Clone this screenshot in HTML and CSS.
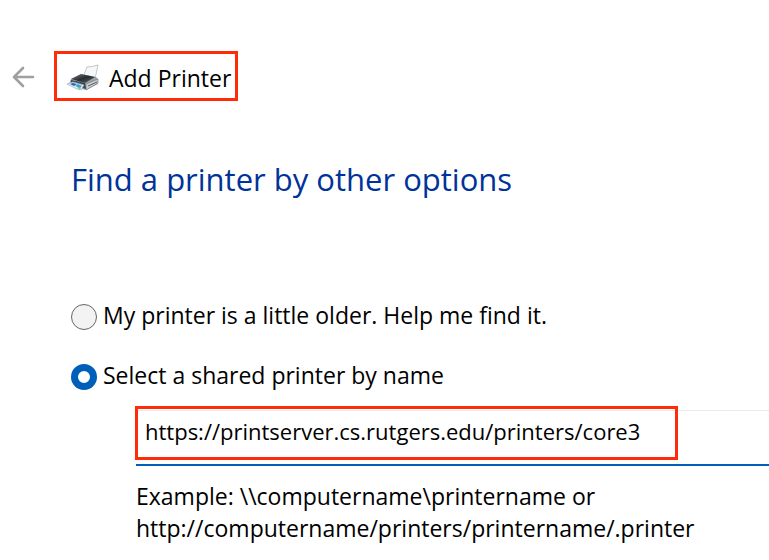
FILE: index.html
```html
<!DOCTYPE html>
<html lang="en">
<head>
  <meta charset="UTF-8">
  <title>Add Printer</title>
  <link rel="stylesheet" href="styles.css">
</head>
<body>
  <header class="title-bar">
    <button type="button" class="back-button" aria-label="Back">
      <svg width="24" height="24" viewBox="0 0 24 24" fill="none" stroke="#a0a0a0" stroke-width="2.6" stroke-linecap="round" stroke-linejoin="round">
        <path d="M21 13H3M11 4L2 13l9 9"/>
      </svg>
    </button>
    <div class="window-title highlight">
      <svg class="printer-icon" width="34" height="28" viewBox="1 0 34 28">
        <defs>
          <linearGradient id="lid" x1="0" y1="0" x2="1" y2="1">
            <stop offset="0" stop-color="#80868b"/>
            <stop offset=".5" stop-color="#282c30"/>
            <stop offset="1" stop-color="#62686d"/>
          </linearGradient>
        </defs>
        <!-- paper -->
        <path d="M17 13l4-10q5 0 11-2l-3 14z" fill="#f5f7f8" stroke="#b4babd" stroke-width=".8"/>
        <!-- body -->
        <path d="M5 15l10-5 15 3 2 2v5l-12 6-4-1-13-5z" fill="#9ca3a8"/>
        <path d="M20 20l12-5v4l-12 7z" fill="#c9ced1" stroke="#747b80" stroke-width=".7"/>
        <path d="M22 22l9-4" stroke="#596065"/>
        <path d="M5 15l10-5 14 3-10 6z" fill="url(#lid)"/>
        <path d="M5 16l14 3 1 6-15-5z" fill="#3c444c"/>
        <!-- printed photos -->
        <path d="M1 20l6-2 11 3-3 5-4-1z" fill="#e9eff3" stroke="#a2abb1" stroke-width=".7"/>
        <path d="M4 20l3-1 4 1-3 2z" fill="#176ac0"/>
        <path d="M9 22l3-2 4 2-2 2z" fill="#29a4ed"/>
        <path d="M11 24l2-1 2 1-1 1z" fill="#77b864"/>
      </svg>
      <span>Add Printer</span>
    </div>
  </header>

  <main class="content">
    <h1>Find a printer by other options</h1>
    <form class="options">
      <label class="option">
        <input type="radio" name="method">
        <span>My printer is a little older. Help me find it.</span>
      </label>
      <label class="option">
        <input type="radio" name="method" checked>
        <span>Select a shared printer by name</span>
      </label>
      <div class="shared-printer">
        <div class="name-field">
          <input type="text" class="name-input" aria-label="Printer name" value="https://printserver.cs.rutgers.edu/printers/core3">
          <span class="field-mark highlight"></span>
        </div>
        <p class="example">Example: \\computername\printername or<br>http://computername/printers/printername/.printer</p>
      </div>
    </form>
  </main>
</body>
</html>
```
FILE: styles.css
```css
body {
  margin: 0;
  background: #fff;
  color: #000;
  font-family: "Open Sans", "Noto Sans", sans-serif;
  font-size: 23px;
}

.highlight {
  border: 3px solid #ff2c0a;
}

.title-bar {
  display: flex;
  align-items: center;
  gap: 18px;
  padding: 51px 12px 0;
}

.back-button {
  display: flex;
  padding: 0;
  border: 0;
  background: none;
}

.window-title {
  display: flex;
  align-items: center;
  gap: 8px;
  padding: 8px 4px 4px 10px;
  line-height: 32px;
}

.content {
  padding-left: 71px;
}

h1 {
  margin: 58px 0 0;
  color: #003399;
  font-size: 31px;
  font-weight: 400;
  line-height: 40px;
}

.options {
  margin-top: 100px;
}

.option {
  display: flex;
  align-items: center;
  gap: 6px;
  margin-bottom: 24px;
  line-height: 32px;
}

.option span {
  padding-bottom: 4px;
}

.option input {
  appearance: none;
  box-sizing: border-box;
  width: 26px;
  height: 26px;
  margin: 0;
  border: 1px solid #666;
  border-radius: 50%;
  background: #f3f3f3;
}

.option input:checked {
  border: 7px solid #005fb8;
  background: #fff;
}

.shared-printer {
  margin: -9px 0 0 65px;
}

.name-field {
  position: relative;
  border-top: 1px solid #eaeaea;
  border-bottom: 2px solid #005fb8;
}

.name-input {
  display: block;
  box-sizing: border-box;
  width: 100%;
  height: 53px;
  padding: 0 9px 14px;
  border: 0;
  background: #fff;
  color: inherit;
  font: inherit;
  font-size: 22px;
}

/* red box around the typed address */
.field-mark {
  position: absolute;
  top: -5px;
  bottom: 4px;
  left: -1px;
  width: 537px;
  pointer-events: none;
}

.example {
  margin: 14px 0 0;
  line-height: 32px;
}
```
